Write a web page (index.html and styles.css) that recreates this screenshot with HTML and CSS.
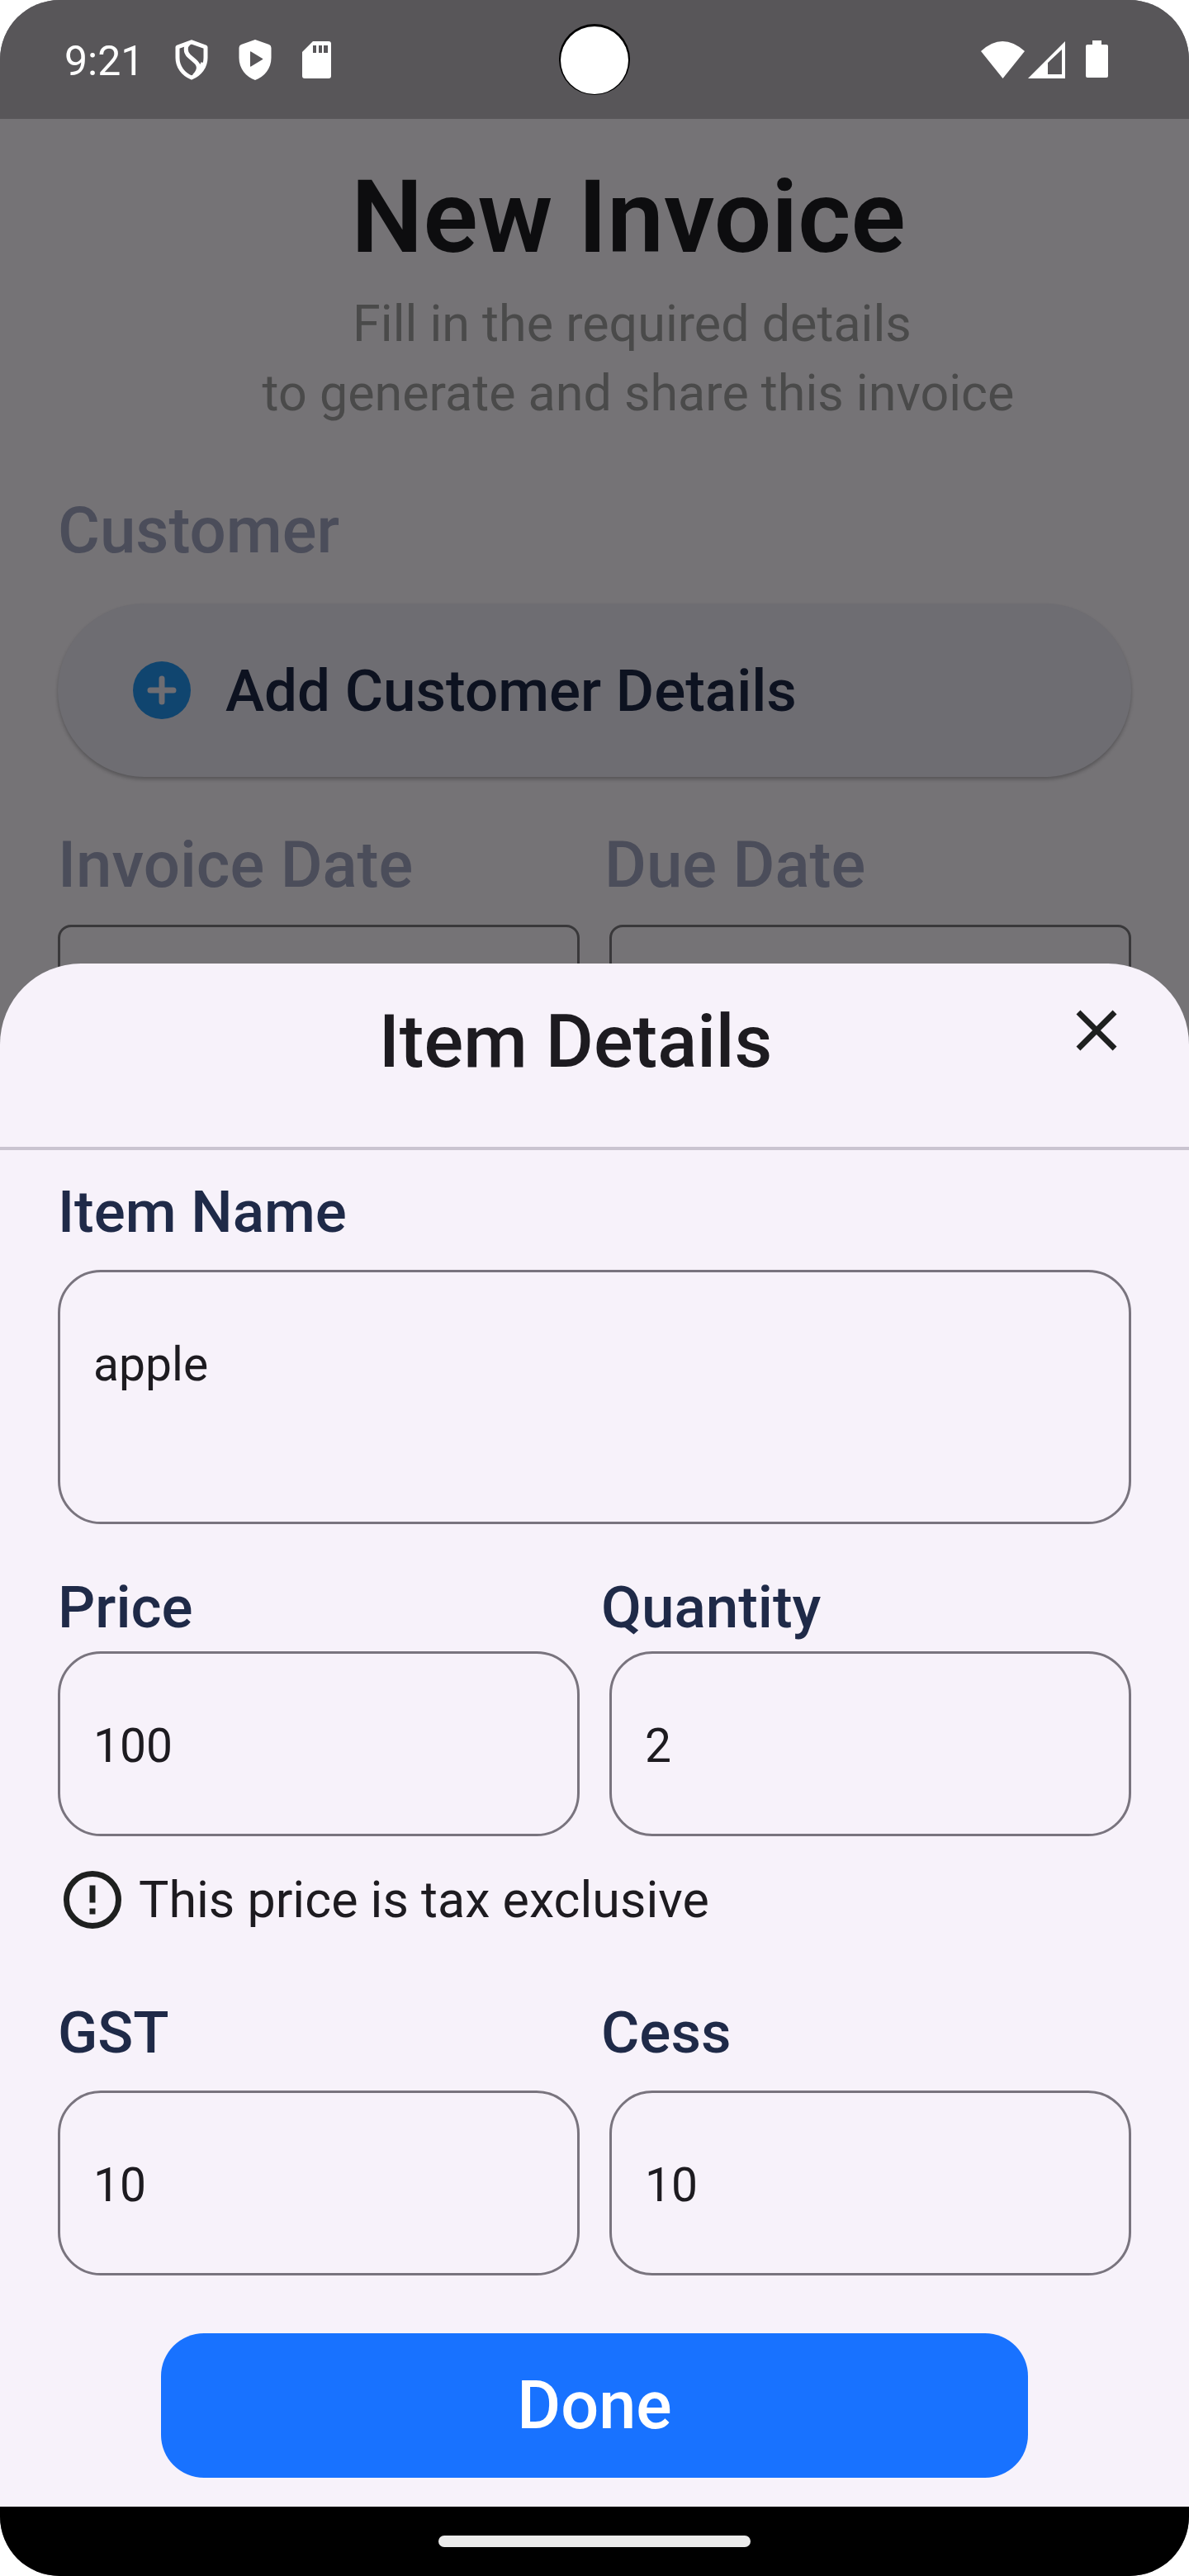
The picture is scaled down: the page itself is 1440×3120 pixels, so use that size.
FILE: index.html
```html
<!DOCTYPE html>
<html lang="en">
<head>
<meta charset="utf-8">
<meta name="viewport" content="width=device-width, initial-scale=1">
<title>New Invoice</title>
<link rel="stylesheet" href="styles.css">
</head>
<body>
<div class="device">
  <div class="status-bar">
    <div class="status-group">
      <time class="clock">9:21</time>
      <svg class="status-icon shield" viewBox="0 0 40 49" aria-hidden="true">
        <path d="M20 2.8 37 9V22C37 33 30 42 20 46C10 42 3 33 3 22V9Z" fill="none" stroke="#fff" stroke-width="5" stroke-linejoin="round"/>
        <path d="M17 4C12 8 12 15 17 20L24 26C30 31 30 37 23 44M28 37C31 34 33 31 34 28" fill="none" stroke="#fff" stroke-width="5"/>
      </svg>
      <svg class="status-icon shield" viewBox="0 0 40 49" aria-hidden="true">
        <path fill="#fff" fill-rule="evenodd" d="M20 0 37 6Q39.500 7 39.500 10V22C39.500 35 31 45 20 49C9 45 .5 35 .5 22V10Q.5 7 3 6ZM14 15V32Q14 33 15 32.500L29 24Q30 23.500 29 23L15 14.500Q14 14 14 15Z"/>
      </svg>
      <svg class="status-icon sd-card" viewBox="0 0 35 45" aria-hidden="true">
        <path fill="#fff" d="M13 0H32Q35 0 35 3V42Q35 45 32 45H3Q0 45 0 42V13Z"/>
        <path fill="#585659" d="M13 5h4v9h-4zM20 5h4v9h-4zM26 5h5v9h-5z"/>
      </svg>
    </div>
    <svg class="camera" viewBox="0 0 86 86" aria-hidden="true">
      <circle cx="43" cy="43" r="43" fill="#000"/><circle cx="43" cy="44" r="41" fill="#fff"/>
    </svg>
    <svg class="signals" viewBox="0 0 154 46" aria-hidden="true">
      <path fill="#fff" d="M0 13Q26 -11 53 13L26.500 46Z"/>
      <path fill="#fff" fill-rule="evenodd" d="M57 46 102 1V46ZM81 27V41H98V11Z"/>
      <path fill="#fff" d="M135 0h11v5h6q2 0 2 2v36q0 2-2 2h-23q-2 0-2-2v-36q0-2 2-2h6z"/>
    </svg>
  </div>

  <main class="invoice">
    <h1 class="page-title">New Invoice</h1>
    <p class="subtitle">Fill in the required details&nbsp;<br>to generate and share this invoice</p>
    <h2 class="section-label">Customer</h2>
    <button class="add-customer" type="button">
      <svg class="plus" viewBox="0 0 70 70" aria-hidden="true">
        <circle cx="35" cy="35" r="35" fill="#10456f"/>
        <path d="M35 21V49M21 35H49" stroke="#6e6d72" stroke-width="7" stroke-linecap="round"/>
      </svg>
      Add Customer Details
    </button>
    <div class="date-labels">
      <label class="section-label" for="invoice-date">Invoice Date</label>
      <label class="section-label" for="due-date">Due Date</label>
    </div>
    <div class="field-row">
      <input class="date-field" id="invoice-date" type="text">
      <input class="date-field" id="due-date" type="text">
    </div>
  </main>

  <section class="sheet" aria-labelledby="sheet-title">
    <header class="sheet-header">
      <h2 class="sheet-title" id="sheet-title">Item Details</h2>
      <button class="close" type="button" aria-label="Close">
        <svg viewBox="0 0 24 24" aria-hidden="true"><path fill="#1e201f" d="M19 6.410 17.590 5 12 10.590 6.410 5 5 6.410 10.590 12 5 17.590 6.410 19 12 13.410 17.590 19 19 17.590 13.410 12z"/></svg>
      </button>
    </header>
    <form class="item-form">
      <label class="field-label name-label" for="item-name">Item Name</label>
      <textarea class="field name-field" id="item-name">apple</textarea>
      <div class="label-row price-labels">
        <label class="field-label" for="price">Price</label>
        <label class="field-label" for="quantity">Quantity</label>
      </div>
      <div class="field-row">
        <input class="field" id="price" type="text" value="100">
        <input class="field" id="quantity" type="text" value="2">
      </div>
      <p class="tax-note">
        <svg class="info" viewBox="0 0 70 70" aria-hidden="true">
          <circle cx="35" cy="35" r="31.500" fill="none" stroke="#1e201f" stroke-width="7"/>
          <path fill="#1e201f" d="M31.500 17.500h7v21h-7zM31.500 45.500h7v7h-7z"/>
        </svg>
        This price is tax exclusive
      </p>
      <div class="label-row tax-labels">
        <label class="field-label" for="gst">GST</label>
        <label class="field-label" for="cess">Cess</label>
      </div>
      <div class="field-row">
        <input class="field" id="gst" type="text" value="10">
        <input class="field" id="cess" type="text" value="10">
      </div>
      <button class="done" type="button">Done</button>
    </form>
  </section>

  <div class="nav-bar"><span class="nav-handle"></span></div>
</div>
</body>
</html>
```
FILE: styles.css
```css
* {
  box-sizing: border-box;
}

body {
  margin: 0;
  background: #fff;
  font-family: Roboto, "Noto Sans", sans-serif;
  font-weight: 400;
}

h1, h2, p {
  margin: 0;
}

button, input, textarea {
  margin: 0;
  font-family: inherit;
}

.device {
  display: flex;
  flex-direction: column;
  min-height: 100vh;
  overflow: hidden;
  border-radius: 72px;
  background: #757376;
}

/* Status bar */
.status-bar {
  display: grid;
  grid-template-columns: 1fr auto 1fr;
  align-items: center;
  height: 144px;
  padding: 0 98px 0 78px;
  background: #585659;
}

.status-group {
  display: flex;
  align-items: center;
}

.clock {
  width: 134px;
  padding-top: 3px;
  color: #fff;
  font-size: 50px;
  line-height: 56px;
}

.status-icon {
  flex: none;
  margin-right: 37px;
}

.shield {
  width: 40px;
  height: 49px;
}

.sd-card {
  width: 35px;
  height: 45px;
}

.camera {
  width: 86px;
  height: 86px;
  margin-left: 20px;
}

.signals {
  justify-self: end;
  width: 154px;
  height: 46px;
}

/* Dimmed invoice page behind the sheet */
.invoice {
  height: 1023px;
  padding: 48px 70px 0;
}

.page-title {
  padding-left: 82px;
  color: #0d0d0f;
  font-size: 123px;
  font-weight: 600;
  line-height: 142px;
  text-align: center;
}

.subtitle {
  padding: 16px 0 0 106px;
  color: #4a4a4a;
  font-size: 61px;
  line-height: 84px;
  text-align: center;
}

.section-label {
  color: #4b4d5a;
  font-size: 78px;
  font-weight: 500;
  line-height: 98px;
}

.subtitle + .section-label {
  padding-top: 76px;
}

.add-customer {
  display: flex;
  align-items: center;
  gap: 42px;
  width: 100%;
  height: 210px;
  margin-top: 39px;
  padding: 0 91px;
  border: 0;
  border-radius: 105px;
  background: #6e6d72;
  box-shadow: 0 3px 4px rgba(0, 0, 0, 0.25);
  color: #0d1220;
  font-size: 71px;
  font-weight: 500;
}

.plus {
  width: 70px;
  height: 70px;
}

.date-labels,
.label-row,
.field-row {
  display: grid;
  grid-template-columns: 1fr 1fr;
}

.date-labels {
  gap: 24px;
  padding: 58px 0 23px;
}

.field-row {
  gap: 36px;
}

.date-field {
  width: 100%;
  height: 196px;
  border: 3px solid #39383a;
  border-radius: 16px;
  background: transparent;
}

/* Bottom sheet */
.sheet {
  position: relative;
  flex: 1;
  border-radius: 98px 98px 0 0;
  background: #f7f2fa;
}

.sheet-header {
  display: grid;
  grid-template-columns: 1fr auto;
  align-items: start;
  height: 226px;
  padding: 39px 70px 0;
  border-bottom: 4px solid #cac4d0;
}

.sheet-title {
  padding: 7px 0 0 38px;
  color: #1d1b20;
  font-size: 89px;
  font-weight: 500;
  line-height: 98px;
  text-align: center;
}

.close {
  display: flex;
  padding: 0;
  border: 0;
  background: none;
}

.close svg {
  width: 84px;
  height: 84px;
}

.item-form {
  display: flex;
  flex-direction: column;
  padding: 0 70px 35px;
}

.field-label {
  color: #1f2a48;
  font-size: 71px;
  font-weight: 500;
  line-height: 84px;
}

.name-label {
  padding: 33px 0 28px;
}

.label-row {
  gap: 16px;
}

.price-labels {
  padding: 59px 0 11px;
}

.tax-labels {
  padding: 77px 0 28px;
}

.field {
  width: 100%;
  height: 224px;
  padding: 4px 40px 0;
  border: 3px solid #79747e;
  border-radius: 52px;
  outline: 0;
  background: transparent;
  color: #1d1b20;
  font-size: 57px;
  line-height: 84px;
}

.name-field {
  display: block;
  height: 308px;
  padding-top: 70px;
  overflow: hidden;
  resize: none;
}

.tax-note {
  display: flex;
  align-items: center;
  gap: 21px;
  padding: 35px 7px 0;
  color: #1d1b20;
  font-size: 61px;
  line-height: 84px;
}

.info {
  flex: none;
  width: 70px;
  height: 70px;
}

.done {
  width: calc(100% - 250px);
  height: 175px;
  margin: 70px auto 0;
  padding: 0;
  border: 0;
  border-radius: 52px;
  background: #1872ff;
  color: #fff;
  font-size: 81px;
  font-weight: 500;
}

/* Gesture navigation */
.nav-bar {
  display: flex;
  align-items: center;
  justify-content: center;
  height: 84px;
  background: #000;
}

.nav-handle {
  width: 378px;
  height: 14px;
  border-radius: 7px;
  background: #ebebeb;
}
```
